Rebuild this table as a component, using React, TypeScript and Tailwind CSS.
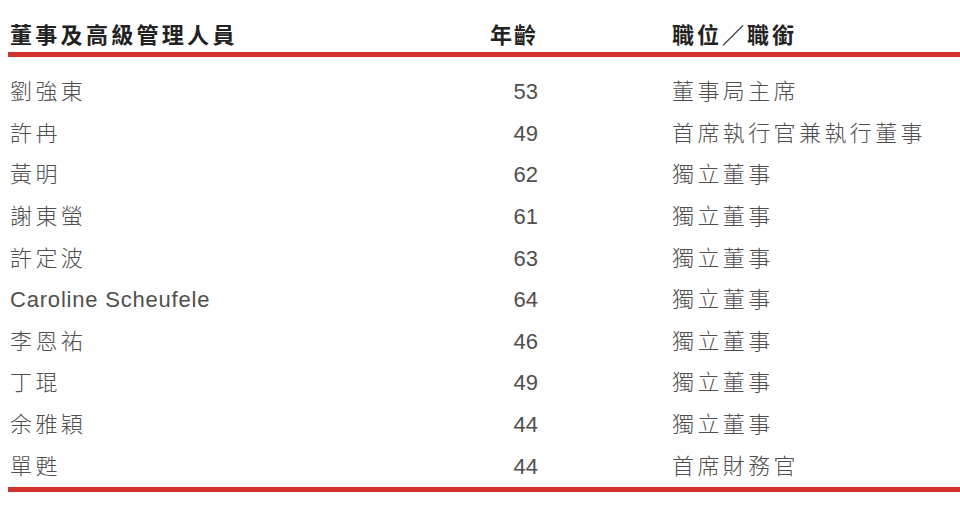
const rows: [string, string, string][] = [
  ["劉強東", "53", "董事局主席"],
  ["許冉", "49", "首席執行官兼執行董事"],
  ["黃明", "62", "獨立董事"],
  ["謝東螢", "61", "獨立董事"],
  ["許定波", "63", "獨立董事"],
  ["Caroline Scheufele", "64", "獨立董事"],
  ["李恩祐", "46", "獨立董事"],
  ["丁琨", "49", "獨立董事"],
  ["余雅穎", "44", "獨立董事"],
  ["單甦", "44", "首席財務官"],
];

const font = {
  fontFamily: '"Liberation Sans", "Noto Sans CJK TC", sans-serif',
};

export default function App() {
  return (
    <div className="w-[960px] h-[514px] bg-white pl-2 overflow-hidden" style={font}>
      {/* header */}
      <div className="flex h-[57px] pt-[25px] border-b-[5px] border-[#d3322e] text-[22px] leading-[22px] font-bold text-[#222] pl-[2px]">
        <div className="w-[438px] tracking-[3.3px]">董事及高級管理人員</div>
        <div className="w-[90px] text-right tracking-[2px] -mr-[2px]">年齡</div>
        <div className="pl-[136px] tracking-[3px]">職位／職銜</div>
      </div>

      {/* body */}
      <div className="pt-[14px] border-b-[5px] border-[#d3322e] text-[22px] font-light text-[#4f4f4f]">
        {rows.map(([name, age, role]) => (
          <div key={name} className="flex items-center h-[41.6px] pl-[2px]">
            <div
              className={`w-[438px] ${
                /[A-Za-z]/.test(name) ? "tracking-[0.8px]" : "tracking-[3.4px]"
              }`}
            >
              {name}
            </div>
            <div className="w-[90px] text-right">{age}</div>
            <div className="pl-[134px] tracking-[3.4px]">{role}</div>
          </div>
        ))}
      </div>
    </div>
  );
}
